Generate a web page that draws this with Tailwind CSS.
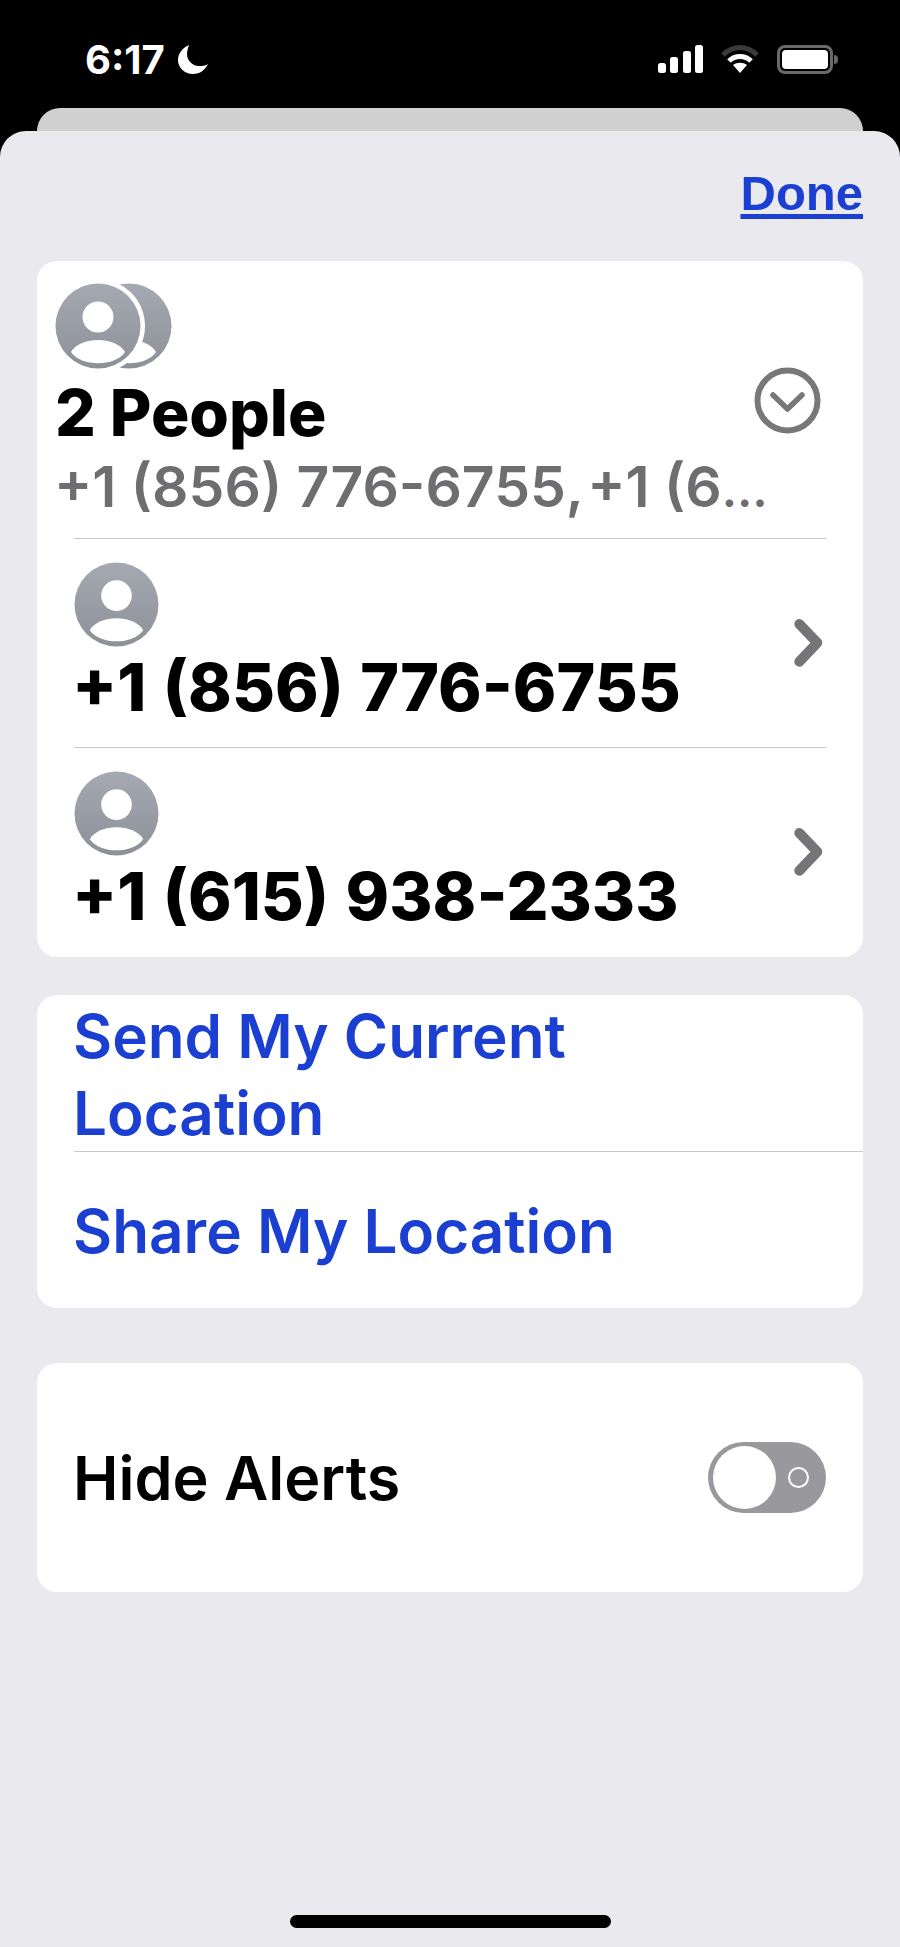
<!DOCTYPE html>
<html lang="en">
<head>
  <meta charset="UTF-8">
  <meta name="viewport" content="width=device-width, initial-scale=1.0">
  <title>Details</title>
  <script src="https://cdn.jsdelivr.net/npm/@tailwindcss/browser@4"></script>
</head>
<body class="bg-black font-['Inter',sans-serif] overflow-hidden">
  <div class="w-[900px] h-[1947px] flex flex-col bg-black">
    <!-- status bar -->
    <div class="h-[108px] shrink-0 flex justify-between items-start pt-[38px] pl-[85px] pr-[62px] text-white">
      <div class="flex items-center gap-[13px]">
        <span class="text-[40px] leading-[44px] font-bold">6:17</span>
        <svg class="w-[31px] h-[30px]" viewBox="0 0 31 30"><path fill="#fff" d="M11 0 C4 3 0 9 0 15 C0 23 7 29 15 29 C22 29 27 25 30 19 C27 21 24 21 21 21 C14 21 9 15 9 9 C9 6 10 3 11 0 Z"/></svg>
      </div>
      <div class="flex items-start gap-[18px] pt-[7px]">
        <svg class="w-[45px] h-[28px]" viewBox="0 0 45 28" fill="#fff"><rect x="0" y="18" width="8" height="10" rx="2.5"/><rect x="12" y="12" width="8" height="16" rx="2.5"/><rect x="25" y="6" width="8" height="22" rx="2.5"/><rect x="37" y="0" width="8" height="28" rx="2.5"/></svg>
        <svg class="w-[38px] h-[28px]" viewBox="0 0 38 28" fill="none"><path d="M2 10 C12 0 26 0 36 10" stroke="#3a3a3a" stroke-width="5"/><path d="M8 16 C14 10 24 10 30 16" stroke="#fff" stroke-width="5"/><path d="M12 20 L19 28 L26 20 C22 17 16 17 12 20 Z" fill="#fff"/></svg>
        <div class="flex items-center">
          <div class="w-[56px] h-[29px] rounded-[8px] border-[3px] border-[#6a6a6a] p-[2px]"><div class="w-full h-full bg-white rounded-[4px]"></div></div>
          <div class="w-[4px] h-[9px] bg-[#6a6a6a] rounded-r-full ml-[1px]"></div>
        </div>
      </div>
    </div>
    <!-- sheet behind -->
    <div class="h-[23px] shrink-0 mx-[37px] bg-[#d0d0d0] rounded-t-[24px]"></div>
    <!-- front sheet -->
    <div class="flex-1 flex flex-col bg-[#e9e9ee] rounded-t-[26px] px-[37px]">
      <div class="flex justify-end pt-[34px] h-[130px]">
        <span class="font-['Liberation_Sans',sans-serif] text-[49px] leading-[56px] font-bold text-[#1a3fd1] underline decoration-[5px] underline-offset-[4px]">Done</span>
      </div>

      <!-- people card -->
      <div class="bg-white rounded-[20px] h-[696px] pt-[22px]">
        <div class="flex items-center pl-[18px] pr-[42px]">
          <div class="flex-1 min-w-0">
            <svg class="w-[117px] h-[86px]" viewBox="0 0 117 86">
              <defs>
                <linearGradient id="av" x1="0" y1="0" x2="0" y2="1"><stop offset="0" stop-color="#a5a9b2"/><stop offset="1" stop-color="#8d9097"/></linearGradient>
              </defs>
              <circle cx="74" cy="43" r="42.5" fill="url(#av)"/>
              <path d="M47 69 C56 53 92 53 101 69 C91 84 57 84 47 69 Z" fill="#fff"/>
              <circle cx="43" cy="43" r="47" fill="#fff"/>
              <circle cx="43" cy="43" r="42.5" fill="url(#av)"/>
              <circle cx="43" cy="34" r="15.5" fill="#fff"/>
              <path d="M16 69 C25 53 61 53 70 69 C60 84 26 84 16 69 Z" fill="#fff"/>
            </svg>
            <div class="text-[64px] leading-[76px] font-extrabold text-black mt-[6px]">2 People</div>
            <div class="h-[72px] text-[57px] leading-[72px] font-semibold text-[#6e6e70] whitespace-nowrap -ml-[1px]">+1 (856) 776-6755<span class="[word-spacing:-10px]">, </span>+1 (6<span class="text-[48px]">…</span></div>
          </div>
          <svg class="w-[67px] h-[67px] -ml-[40px] mb-[6px] shrink-0" viewBox="0 0 67 67" fill="none" stroke="#787878"><circle cx="33.5" cy="33.5" r="30" stroke-width="6"/><path d="M19 28 L33.5 42 L48 28" stroke-width="5.5" stroke-linecap="round" stroke-linejoin="round"/></svg>
        </div>

        <div class="mx-[37px] mt-[15px] border-t border-[#c8c8ca] h-[209px] pt-[23px] flex items-start justify-between">
          <div>
            <svg class="w-[85px] h-[85px]" viewBox="0 0 86 86">
              <circle cx="43" cy="43" r="42.5" fill="url(#av)"/>
              <circle cx="43" cy="34" r="15.5" fill="#fff"/>
              <path d="M16 69 C25 53 61 53 70 69 C60 84 26 84 16 69 Z" fill="#fff"/>
            </svg>
            <div class="text-[66px] leading-[72px] font-extrabold text-black mt-[4px] -ml-[2px] [word-spacing:2px]">+1 (856) 776-6755</div>
          </div>
          <svg class="w-[34px] h-[48px] mt-[57px] mr-[-1px]" viewBox="0 0 34 48" fill="none" stroke="#757578" stroke-width="10" stroke-linecap="round" stroke-linejoin="round"><path d="M6.3 5 L24.3 23.7 L6.3 42.7"/></svg>
        </div>
        <div class="mx-[37px] border-t border-[#c8c8ca] pt-[23px] flex items-start justify-between">
          <div>
            <svg class="w-[85px] h-[85px]" viewBox="0 0 86 86">
              <circle cx="43" cy="43" r="42.5" fill="url(#av)"/>
              <circle cx="43" cy="34" r="15.5" fill="#fff"/>
              <path d="M16 69 C25 53 61 53 70 69 C60 84 26 84 16 69 Z" fill="#fff"/>
            </svg>
            <div class="text-[66px] leading-[72px] font-extrabold text-black mt-[4px] -ml-[2px] [word-spacing:2px]">+1 (615) 938-2333</div>
          </div>
          <svg class="w-[34px] h-[48px] mt-[57px] mr-[-1px]" viewBox="0 0 34 48" fill="none" stroke="#757578" stroke-width="10" stroke-linecap="round" stroke-linejoin="round"><path d="M6.3 5 L24.3 23.7 L6.3 42.7"/></svg>
        </div>
      </div>

      <!-- location card -->
      <div class="bg-white rounded-[20px] mt-[38px] h-[313px] text-[#1a3fd1] text-[60.2px] font-semibold">
        <div class="ml-[37px] pt-[3px] h-[157px] leading-[77px] border-b border-[#c8c8ca]"><span class="-ml-[1px] block">Send My Current<br>Location</span></div>
        <div class="ml-[36px] leading-[78px] pt-[41px]">Share My Location</div>
      </div>

      <!-- alerts card -->
      <div class="bg-white rounded-[20px] mt-[55px] h-[229px] pb-[1px] flex items-center justify-between pl-[37px] pr-[37px]">
        <span class="text-[61px] font-semibold text-black -ml-[1px] mt-[4px]">Hide Alerts</span>
        <div class="w-[118px] h-[71px] rounded-full bg-[#98989d] flex items-center pl-[5px]">
          <div class="w-[63px] h-[63px] rounded-full bg-white"></div>
          <div class="w-[21px] h-[21px] rounded-full border-2 border-white ml-[12px]"></div>
        </div>
      </div>

      <!-- home indicator -->
      <div class="mt-auto pb-[19px] flex justify-center">
        <div class="w-[321px] h-[13px] rounded-full bg-black"></div>
      </div>
    </div>
  </div>
</body>
</html>
